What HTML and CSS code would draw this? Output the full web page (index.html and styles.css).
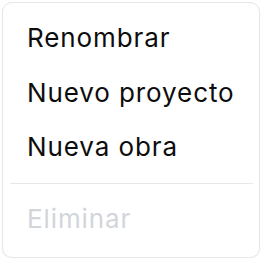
FILE: index.html
```html
<!DOCTYPE html>
<html lang="es">
<head>
<meta charset="utf-8">
<link rel="stylesheet" href="styles.css">
</head>
<body>
<div class="menu">
  <div class="item">Renombrar</div>
  <div class="item">Nuevo proyecto</div>
  <div class="item">Nueva obra</div>
  <div class="divider"></div>
  <div class="item disabled">Eliminar</div>
</div>
</body>
</html>
```
FILE: styles.css
```css
html, body {
  margin: 0;
  padding: 0;
  background: #ffffff;
}
body {
  padding: 2px 0 0 2px;
  font-family: Inter, "Noto Sans", sans-serif;
}
.menu {
  box-sizing: border-box;
  width: 258px;
  height: 256px;
  border: 1px solid #e3e6ea;
  border-radius: 10px;
  background: #fff;
  box-shadow: 0 1px 2px rgba(0, 0, 0, 0.04);
  padding: 8px 0 10px 0;
}
.item {
  padding: 10px 0 10px 24px;
  font-size: 26px;
  line-height: 34.5px;
  letter-spacing: 0.9px;
  color: #0d0d0d;
}
.item.disabled {
  color: #d2d5da;
}
.divider {
  height: 1px;
  background: #e5e7eb;
  margin: 8px 6px 8px 7px;
}
```
